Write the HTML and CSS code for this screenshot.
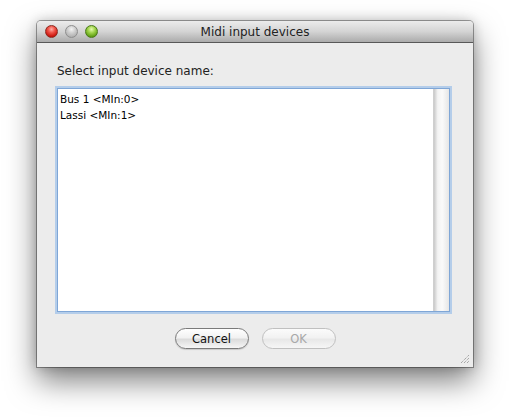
FILE: index.html
```html
<!DOCTYPE html>
<html>
<head>
<meta charset="utf-8">
<link rel="stylesheet" href="styles.css">
</head>
<body>
<div class="window">
  <div class="titlebar">
    <div class="lights">
      <span class="light red"></span>
      <span class="light gray"></span>
      <span class="light green"></span>
    </div>
    <div class="title">Midi input devices</div>
  </div>
  <div class="content">
    <div class="label">Select input device name:</div>
    <div class="listbox">
      <div class="items">
        <div class="item">Bus 1 &lt;MIn:0&gt;</div>
        <div class="item">Lassi &lt;MIn:1&gt;</div>
      </div>
      <div class="scrolltrack"></div>
    </div>
    <div class="buttons">
      <button class="btn">Cancel</button>
      <button class="btn disabled">OK</button>
    </div>
  </div>
  <svg class="grip" width="10" height="10" viewBox="0 0 10 10">
    <path d="M1 9 L9 1 M4 9 L9 4 M7 9 L9 7" stroke="#8a8a8a" stroke-width="1" stroke-dasharray="1 1" fill="none"/>
  </svg>
</div>
</body>
</html>
```

FILE: styles.css
```css
html, body {
  margin: 0;
  padding: 0;
  background: #ffffff;
  height: 100%;
}
body {
  font-family: "DejaVu Sans", "Liberation Sans", sans-serif;
  padding: 21px 0 0 37px;
  box-sizing: border-box;
}
.window {
  position: relative;
  width: 436px;
  height: 346px;
  background: #ececec;
  box-shadow: 0 14px 30px rgba(0,0,0,0.5), 0 0 12px rgba(0,0,0,0.2), 0 0 0 1px rgba(0,0,0,0.35);
  border-radius: 4px 4px 0 0;
  display: flex;
  flex-direction: column;
}
.titlebar {
  height: 21px;
  border-bottom: 1px solid #585858;
  background: linear-gradient(#ececec, #d4d4d4 50%, #ababab);
  border-radius: 4px 4px 0 0;
  position: relative;
  display: flex;
  align-items: center;
  justify-content: center;
}
.lights {
  position: absolute;
  left: 8px;
  top: 4px;
  display: flex;
  gap: 7px;
}
.light {
  width: 13px;
  height: 13px;
  border-radius: 50%;
  box-sizing: border-box;
}
.red {
  background: radial-gradient(circle at 50% 30%, #ffb0a8 0%, #f0554a 35%, #c8140c 75%, #a00 100%);
  border: 1px solid #8c2a20;
}
.gray {
  background: radial-gradient(circle at 50% 30%, #f4f4f4 0%, #cfcfcf 40%, #b0b0b0 80%, #9e9e9e 100%);
  border: 1px solid #8e8e8e;
}
.green {
  background: radial-gradient(circle at 50% 30%, #e6fbb0 0%, #9fd34a 38%, #5d9c12 78%, #3d7a08 100%);
  border: 1px solid #4a7a1a;
}
.title {
  font-size: 12px;
  color: #222;
  padding-top: 1px;
}
.content {
  flex: 1;
  display: flex;
  flex-direction: column;
  padding: 0 20px 0 20px;
}
.label {
  font-size: 12px;
  color: #222;
  margin-top: 21px;
  height: 14px;
  line-height: 14px;
}
.listbox {
  margin-top: 10px;
  height: 222px;
  width: 391px;
  border: 1px solid #7fa6d6;
  box-shadow: 0 0 0 2px #b4cdea;
  background: #fff;
  display: flex;
}
.items {
  flex: 1;
  padding: 2px 0 0 2px;
}
.item {
  font-size: 10.5px;
  color: #000;
  height: 16px;
  line-height: 16px;
}
.scrolltrack {
  width: 15px;
  background: linear-gradient(90deg, #c9c9c9, #f3f3f3 25%, #fafafa 55%, #e6e6e6 100%);
  border-left: 1px solid #cfcfcf;
}
.buttons {
  display: flex;
  justify-content: center;
  gap: 13px;
  margin-top: 16px;
}
.btn {
  width: 74px;
  height: 21px;
  border-radius: 11px;
  border: 1px solid #7a7a7a;
  background: linear-gradient(#ffffff, #f2f2f2 45%, #dcdcdc 55%, #f6f6f6);
  font-family: "DejaVu Sans", sans-serif;
  font-size: 11.5px;
  color: #111;
  padding: 0;
  box-shadow: 0 1px 1px rgba(0,0,0,0.15);
}
.btn.disabled {
  color: #a8a8a8;
  border-color: #c0c0c0;
  background: linear-gradient(#fbfbfb, #f2f2f2 45%, #e8e8e8 55%, #f6f6f6);
  box-shadow: none;
}
.grip {
  position: absolute;
  right: 3px;
  bottom: 3px;
}
```
